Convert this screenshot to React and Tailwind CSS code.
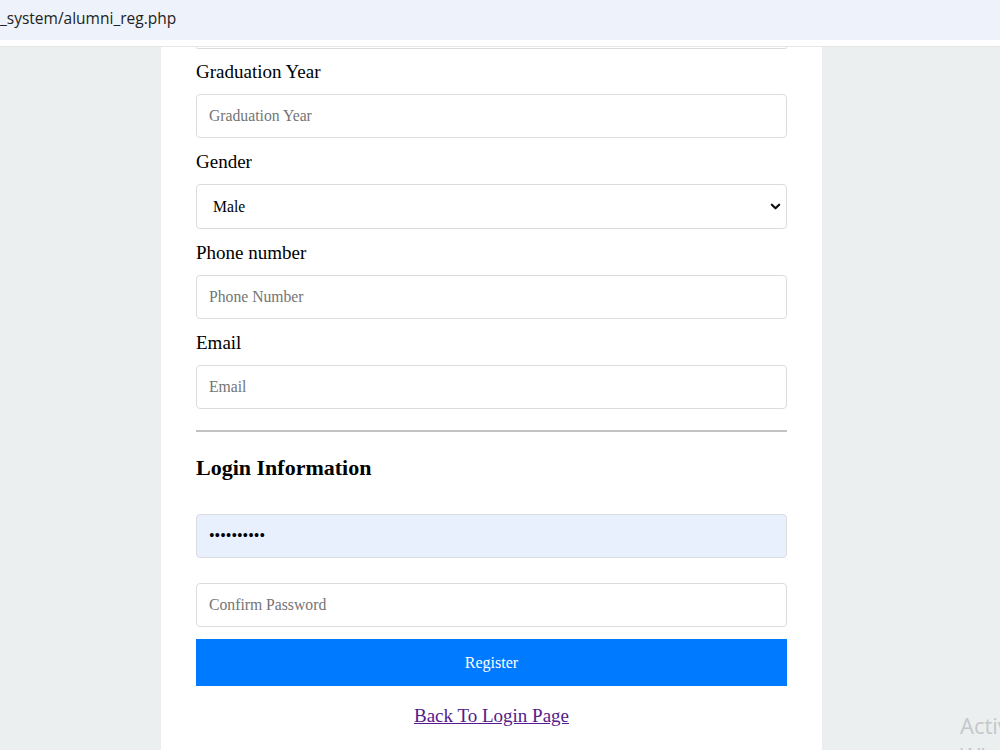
import React from 'react';

const serif = { fontFamily: '"Liberation Serif", "Times New Roman", serif' };

function Field({ label, children }) {
  return (
    <div className="mb-[13px]">
      <label className="mb-[11px] block text-[19px] leading-[22px] text-black">{label}</label>
      {children}
    </div>
  );
}

function Input({ placeholder, type = 'text', className = '' }) {
  return (
    <input
      type={type}
      placeholder={placeholder}
      style={serif}
      className={`block h-[44px] w-full rounded-[4px] border border-[#dcdcdc] px-3 text-[15.7px] text-black placeholder:text-[#757575] focus:outline-none ${className}`}
    />
  );
}

export default function App() {
  return (
    <div className="relative h-[750px] overflow-hidden bg-[#ebeff0]">
      {/* browser address bar */}
      <div className="flex h-[40px] items-center bg-[#eef2fa] text-[15.5px] text-[#222]" style={{ fontFamily: '"Open Sans", "Noto Sans", sans-serif' }}>
        <span className="-mt-[2px]">_system/alumni_reg.php</span>
      </div>
      <div className="h-[7px] border-b border-[#e4e6ea] bg-white" />

      <div className="ml-[161px] w-[661px] bg-white px-[35px] pb-8" style={serif}>
        {/* tail of the field above */}
        <div className="mb-[12px] h-[2px] rounded-b-[4px] border-x border-b border-[#dcdcdc]" />

        <Field label="Graduation Year">
          <Input placeholder="Graduation Year" />
        </Field>

        <Field label="Gender">
          <div className="relative">
            <select
              defaultValue="Male"
              style={serif}
              className="block h-[45px] w-full appearance-none rounded-[4px] border border-[#dcdcdc] bg-white pl-4 text-[15.7px] text-black focus:outline-none"
            >
              <option>Male</option>
              <option>Female</option>
            </select>
            <svg className="pointer-events-none absolute right-[6px] top-[17px] h-[11px] w-[11px]" viewBox="0 0 12 12" fill="none">
              <path d="M2 4l4 4 4-4" stroke="#111" strokeWidth="2.4" strokeLinecap="round" strokeLinejoin="round" />
            </svg>
          </div>
        </Field>

        <Field label="Phone number">
          <Input placeholder="Phone Number" />
        </Field>

        <Field label="Email">
          <Input placeholder="Email" type="email" />
        </Field>

        {/* margins collapse with the field's mb */}
        <hr className="mt-[21px] border-t-2 border-[#c2c2c2]" />

        <h3 className="mt-[24px] text-[22px] font-bold leading-[24px] text-black">Login Information</h3>

        <input
          type="password"
          defaultValue="password12"
          style={serif}
          className="mt-[34px] block h-[44px] w-full rounded-[4px] border border-[#dcdcdc] bg-[#e8f0fe] px-3 text-[16px] text-black focus:outline-none"
        />

        <Input placeholder="Confirm Password" type="password" className="mt-[25px]" />

        <button style={serif} className="mt-[12px] block h-[47px] w-full bg-[#007bff] text-[16px] text-white">
          Register
        </button>

        <div className="mt-[16px] text-center">
          <a href="#" className="text-[19px] text-[#551a8b] underline">Back To Login Page</a>
        </div>
      </div>

      {/* windows activation watermark */}
      <div className="pointer-events-none absolute left-[960px] top-[710px] text-[22px] leading-[30px] text-[#c4c7ca]" style={{ fontFamily: '"Open Sans", "Noto Sans", sans-serif' }}>
        Activate Windows
        <div className="text-[14px]">Go to Settings</div>
      </div>
    </div>
  );
}
